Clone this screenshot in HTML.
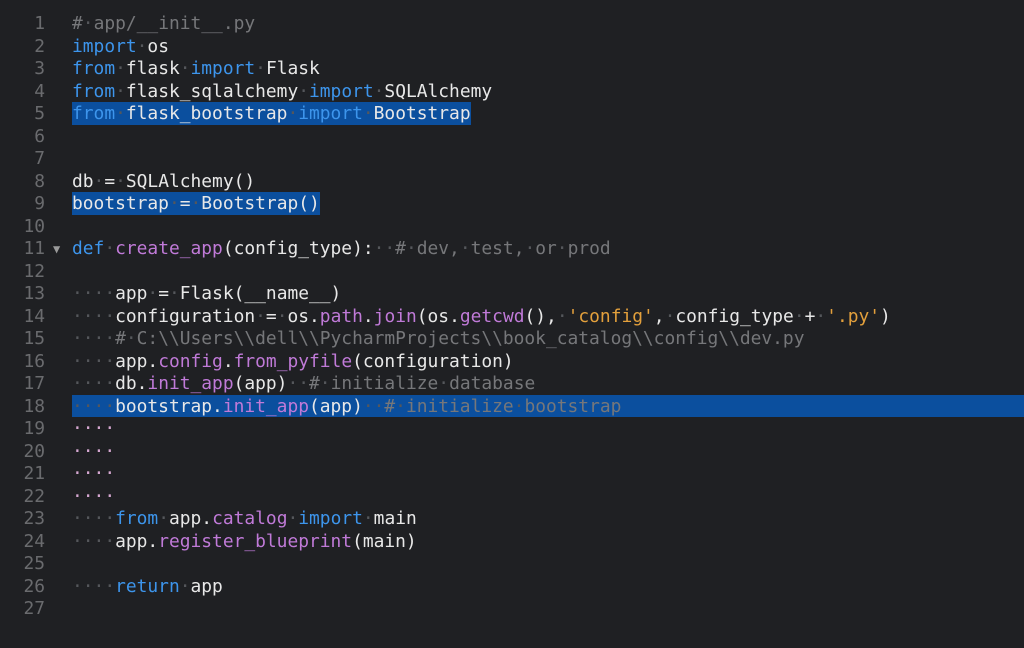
<!DOCTYPE html>
<html><head><meta charset="utf-8"><style>
body{margin:0;width:1024px;height:648px;background:#1f2023;overflow:hidden;font-family:"DejaVu Sans Mono","Liberation Mono",monospace;font-size:17.9px;}
.l{position:absolute;left:0;height:22.5px;line-height:24px;width:1024px;white-space:pre;}
.n{position:absolute;left:0;width:45px;text-align:right;color:#6a6b6e;}
.c{position:absolute;left:72px;color:#e8e8e8;height:22.5px}
.k{color:#3d95ec}.f{color:#c07ad8}.s{color:#e3a03c}.m{color:#76777a}.d{color:#55575b}.p{color:#d6a8d2}
.sel{background:#0b4f9e}
.hl{position:absolute;left:72px;right:0;top:0;bottom:0;background:#0b4f9e}
.tri{position:absolute;left:53px;color:#9a9a9a;font-size:12px}
</style></head><body>
<div class="l" style="top:12px"><span class="n">1</span><span class="c"><span class="m">#<span class="d">·</span>app/__init__.py</span></span></div>
<div class="l" style="top:34.5px"><span class="n">2</span><span class="c"><span class="k">import</span><span class="d">·</span>os</span></div>
<div class="l" style="top:57px"><span class="n">3</span><span class="c"><span class="k">from</span><span class="d">·</span>flask<span class="d">·</span><span class="k">import</span><span class="d">·</span>Flask</span></div>
<div class="l" style="top:79.5px"><span class="n">4</span><span class="c"><span class="k">from</span><span class="d">·</span>flask_sqlalchemy<span class="d">·</span><span class="k">import</span><span class="d">·</span>SQLAlchemy</span></div>
<div class="l" style="top:102px"><span class="n">5</span><span class="c sel"><span class="k">from</span><span class="d">·</span>flask_bootstrap<span class="d">·</span><span class="k">import</span><span class="d">·</span>Bootstrap</span></div>
<div class="l" style="top:124.5px"><span class="n">6</span></div>
<div class="l" style="top:147px"><span class="n">7</span></div>
<div class="l" style="top:169.5px"><span class="n">8</span><span class="c">db<span class="d">·</span>=<span class="d">·</span>SQLAlchemy()</span></div>
<div class="l" style="top:192px"><span class="n">9</span><span class="c sel">bootstrap<span class="d">·</span>=<span class="d">·</span>Bootstrap()</span></div>
<div class="l" style="top:214.5px"><span class="n">10</span></div>
<div class="l" style="top:237px"><span class="n">11</span><span class="tri">▼</span><span class="c"><span class="k">def</span><span class="d">·</span><span class="f">create_app</span>(config_type):<span class="d">··</span><span class="m">#<span class="d">·</span>dev,<span class="d">·</span>test,<span class="d">·</span>or<span class="d">·</span>prod</span></span></div>
<div class="l" style="top:259.5px"><span class="n">12</span></div>
<div class="l" style="top:282px"><span class="n">13</span><span class="c"><span class="d">····</span>app<span class="d">·</span>=<span class="d">·</span>Flask(__name__)</span></div>
<div class="l" style="top:304.5px"><span class="n">14</span><span class="c"><span class="d">····</span>configuration<span class="d">·</span>=<span class="d">·</span>os.<span class="f">path</span>.<span class="f">join</span>(os.<span class="f">getcwd</span>(),<span class="d">·</span><span class="s">'config'</span>,<span class="d">·</span>config_type<span class="d">·</span>+<span class="d">·</span><span class="s">'.py'</span>)</span></div>
<div class="l" style="top:327px"><span class="n">15</span><span class="c"><span class="d">····</span><span class="m">#<span class="d">·</span>C:\\Users\\dell\\PycharmProjects\\book_catalog\\config\\dev.py</span></span></div>
<div class="l" style="top:349.5px"><span class="n">16</span><span class="c"><span class="d">····</span>app.<span class="f">config</span>.<span class="f">from_pyfile</span>(configuration)</span></div>
<div class="l" style="top:372px"><span class="n">17</span><span class="c"><span class="d">····</span>db.<span class="f">init_app</span>(app)<span class="d">··</span><span class="m">#<span class="d">·</span>initialize<span class="d">·</span>database</span></span></div>
<div class="l" style="top:394.5px"><span class="hl"></span><span class="n">18</span><span class="c"><span class="d">····</span>bootstrap.<span class="f">init_app</span>(app)<span class="d">··</span><span class="m">#<span class="d">·</span>initialize<span class="d">·</span>bootstrap</span></span></div>
<div class="l" style="top:417px"><span class="n">19</span><span class="c p">····</span></div>
<div class="l" style="top:439.5px"><span class="n">20</span><span class="c p">····</span></div>
<div class="l" style="top:462px"><span class="n">21</span><span class="c p">····</span></div>
<div class="l" style="top:484.5px"><span class="n">22</span><span class="c p">····</span></div>
<div class="l" style="top:507px"><span class="n">23</span><span class="c"><span class="d">····</span><span class="k">from</span><span class="d">·</span>app.<span class="f">catalog</span><span class="d">·</span><span class="k">import</span><span class="d">·</span>main</span></div>
<div class="l" style="top:529.5px"><span class="n">24</span><span class="c"><span class="d">····</span>app.<span class="f">register_blueprint</span>(main)</span></div>
<div class="l" style="top:552px"><span class="n">25</span></div>
<div class="l" style="top:574.5px"><span class="n">26</span><span class="c"><span class="d">····</span><span class="k">return</span><span class="d">·</span>app</span></div>
<div class="l" style="top:597px"><span class="n">27</span></div>
</body></html>
